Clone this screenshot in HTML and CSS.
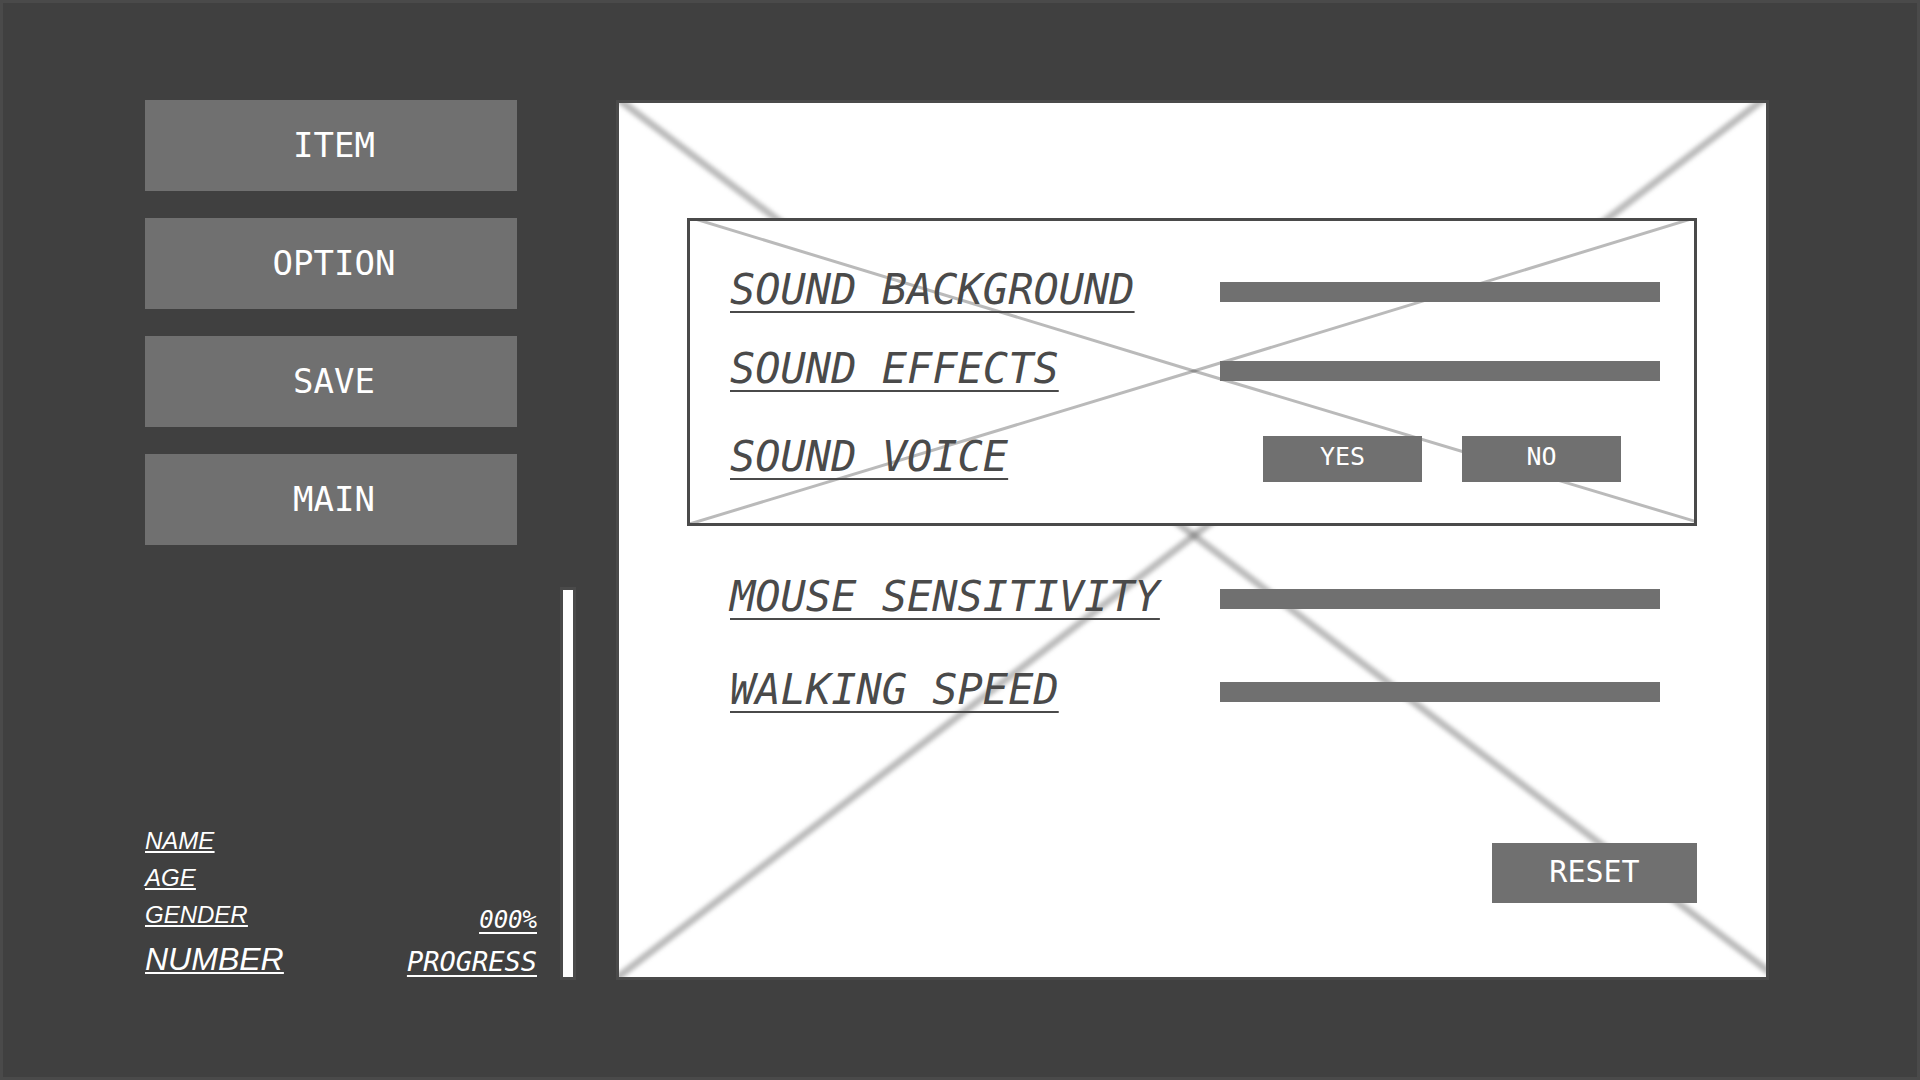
FILE: index.html
```html
<!DOCTYPE html>
<html lang="en">
<head>
<meta charset="utf-8">
<meta name="viewport" content="width=device-width, initial-scale=1">
<title>Options</title>
<link rel="stylesheet" href="styles.css">
</head>
<body>
<div class="screen">
  <aside class="sidebar">
    <nav class="menu">
      <button type="button" class="menu-button">ITEM</button>
      <button type="button" class="menu-button">OPTION</button>
      <button type="button" class="menu-button">SAVE</button>
      <button type="button" class="menu-button">MAIN</button>
    </nav>
    <div class="status">
      <div class="profile">
        <span>NAME</span>
        <span>AGE</span>
        <span>GENDER</span>
        <span class="profile-number">NUMBER</span>
      </div>
      <div class="progress">
        <span class="progress-value">000%</span>
        <span class="progress-label">PROGRESS</span>
      </div>
      <div class="meter"></div>
    </div>
  </aside>

  <main class="panel">
    <svg class="cross" viewBox="0 0 1147 873" preserveAspectRatio="none" aria-hidden="true">
      <path class="cross-wide" d="M-6 -8L575 432L1157 873"/>
      <path class="cross-wide" d="M1150 -8L575 432L-10 880"/>
    </svg>
    <section class="sound">
      <svg class="cross" viewBox="0 0 1004 302" preserveAspectRatio="none" aria-hidden="true">
        <path class="cross-thin" d="M-8 -6L504 150L1024 306"/>
        <path class="cross-thin" d="M1014 -6L504 150L-17 308"/>
      </svg>
      <div class="row">
        <label class="label" for="background">SOUND BACKGROUND</label>
        <input class="slider" type="range" id="background">
      </div>
      <div class="row">
        <label class="label" for="effects">SOUND EFFECTS</label>
        <input class="slider" type="range" id="effects">
      </div>
      <div class="row">
        <span class="label" id="voice">SOUND VOICE</span>
        <div class="choice" role="group" aria-labelledby="voice">
          <button type="button" class="choice-button">YES</button>
          <button type="button" class="choice-button">NO</button>
        </div>
      </div>
    </section>
    <section class="controls">
      <div class="row">
        <label class="label" for="mouse">MOUSE SENSITIVITY</label>
        <input class="slider" type="range" id="mouse">
      </div>
      <div class="row">
        <label class="label" for="speed">WALKING SPEED</label>
        <input class="slider" type="range" id="speed">
      </div>
    </section>
    <button type="button" class="reset">RESET</button>
  </main>
</div>
</body>
</html>
```

FILE: styles.css
```css
* {
  box-sizing: border-box;
}

body {
  margin: 0;
  background: #404040;
  color: #fff;
  font-family: "DejaVu Sans Mono", monospace;
}

button {
  margin: 0;
  padding: 0;
  border: 0;
  background: #707070;
  color: #fff;
  font-family: inherit;
  cursor: pointer;
}

.screen {
  display: grid;
  grid-template-columns: 431px 1fr;
  gap: 40px;
  min-height: 100vh;
  padding: 97px 148px 97px 142px;
  border: 3px solid #4a4a4a;
}

/* Left column */
.sidebar {
  display: grid;
  grid-template-rows: auto 1fr;
  gap: 42px;
}

.menu {
  display: grid;
  gap: 27px;
  margin-right: 59px;
}

.menu-button {
  height: 91px;
  padding: 0 0 2px 6px;
  font-size: 34px;
}

.status {
  display: flex;
  align-items: flex-end;
}

.profile,
.progress {
  display: flex;
  flex-direction: column;
  font-size: 24px;
  font-style: italic;
  line-height: 37px;
  text-decoration: underline 2px;
  text-decoration-skip-ink: none;
}

.profile {
  flex: 1;
  padding-bottom: 1px;
  font-family: "Liberation Sans", sans-serif;
  text-underline-offset: 2px;
}

.profile span,
.progress span {
  text-decoration: inherit;
}

.profile-number {
  margin-top: 6px;
  font-size: 32px;
  line-height: 40px;
}

.progress {
  align-items: flex-end;
  gap: 4px;
  margin-right: 23px;
  text-underline-offset: 4px;
}

.progress-label {
  font-size: 27px;
}

.meter {
  align-self: stretch;
  width: 16px;
  border: 3px solid #4a4a4a;
  background: #fff;
}

/* Settings panel */
.panel {
  position: relative;
  display: flex;
  flex-direction: column;
  padding: 115px 69px 74px 68px;
  border: 3px solid #4a4a4a;
  background: #fff;
  color: #4a4a4a;
}

.cross {
  position: absolute;
  inset: 0;
  width: 100%;
  height: 100%;
  overflow: hidden;
}

.cross path {
  fill: none;
  stroke: #4a4a4a;
  stroke-opacity: 0.38;
}

.cross-wide {
  stroke-width: 7px;
  filter: blur(2px);
}

.cross-thin {
  stroke-width: 3px;
}

.sound {
  position: relative;
  display: grid;
  grid-template-rows: 79px 79px 97px;
  padding: 31px 34px 16px 39px;
  border: 3px solid #4a4a4a;
  background: #fff;
}

.controls {
  position: relative;
  display: grid;
  grid-auto-rows: 93px;
  margin-top: 26px;
  padding: 0 37px 0 42px;
}

.row {
  position: relative;
  display: grid;
  grid-template-columns: 1fr 440px;
  align-items: center;
}

.label {
  padding: 0 0 4px 1px;
  font-size: 42px;
  font-style: italic;
  white-space: nowrap;
  text-decoration: underline 2px;
  text-decoration-skip-ink: none;
  text-underline-offset: 7px;
}

.slider {
  appearance: none;
  width: 100%;
  height: 20px;
  margin: 0;
  background: #707070;
}

.slider::-webkit-slider-thumb {
  appearance: none;
  width: 20px;
  height: 20px;
  background: #707070;
}

.choice {
  display: flex;
  justify-content: flex-end;
  gap: 40px;
  padding-right: 39px;
}

.choice-button {
  width: 159px;
  height: 46px;
  padding-bottom: 4px;
  font-size: 25px;
}

.reset {
  position: relative;
  align-self: flex-end;
  width: 205px;
  height: 60px;
  margin-top: auto;
  padding-bottom: 4px;
  font-size: 30px;
}
```
